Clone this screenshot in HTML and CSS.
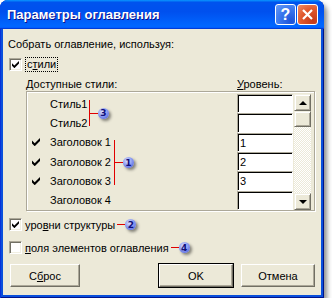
FILE: index.html
```html
<!DOCTYPE html>
<html lang="ru">
<head>
  <meta charset="UTF-8" />
  <title>Параметры оглавления</title>
  <link rel="stylesheet" href="styles.css">
</head>
<body>
  <div class="window">
    <div class="titlebar">
      <span class="title">Параметры оглавления</span>
      <span class="tbtn help">?</span>
      <span class="tbtn close">
        <svg width="13" height="13" viewBox="0 0 13 13"><path d="M2 2 L11 11 M11 2 L2 11" stroke="#fff" stroke-width="2.2" /></svg>
      </span>
    </div>

    <div class="body">
      <div class="caption">Собрать оглавление, используя:</div>

      <label class="check-row">
        <span class="checkbox"><svg class="tick" viewBox="0 0 7 7"><path d="M0 2.2 L2.4 4.6 L7 0 L7 2.6 L2.4 7.2 L0 4.8 Z" /></svg></span>
        <span class="focus">с<u>т</u>или</span>
      </label>

      <div class="list-head">
        <span class="avail">Доступные стили:</span>
        <span><u>У</u>ровень:</span>
      </div>

      <div class="styles-frame">
        <div class="style-list">
          <div class="style-row"><span class="mark"></span>Стиль1</div>
          <div class="style-row"><span class="mark"></span>Стиль2</div>
          <div class="style-row"><span class="mark"><svg class="tick" viewBox="0 0 7 7"><path d="M0 2.2 L2.4 4.6 L7 0 L7 2.6 L2.4 7.2 L0 4.8 Z" /></svg></span>Заголовок 1</div>
          <div class="style-row"><span class="mark"><svg class="tick" viewBox="0 0 7 7"><path d="M0 2.2 L2.4 4.6 L7 0 L7 2.6 L2.4 7.2 L0 4.8 Z" /></svg></span>Заголовок 2</div>
          <div class="style-row"><span class="mark"><svg class="tick" viewBox="0 0 7 7"><path d="M0 2.2 L2.4 4.6 L7 0 L7 2.6 L2.4 7.2 L0 4.8 Z" /></svg></span>Заголовок 3</div>
          <div class="style-row"><span class="mark"></span>Заголовок 4</div>

          <div class="bracket b-styles"><span class="stem"></span><span class="badge">3</span></div>
          <div class="bracket b-heads"><span class="stem"></span><span class="badge">1</span></div>
        </div>

        <div class="levels">
          <div class="level"></div>
          <div class="level"></div>
          <div class="level">1</div>
          <div class="level">2</div>
          <div class="level">3</div>
          <div class="level"></div>
        </div>

        <div class="scrollbar">
          <div class="sb-btn"><span class="arrow up"></span></div>
          <div class="sb-btn thumb"></div>
          <div class="sb-track"></div>
          <div class="sb-btn"><span class="arrow down"></span></div>
        </div>
      </div>

      <label class="check-row after-frame">
        <span class="checkbox"><svg class="tick" viewBox="0 0 7 7"><path d="M0 2.2 L2.4 4.6 L7 0 L7 2.6 L2.4 7.2 L0 4.8 Z" /></svg></span>
        <span class="text">уро<u>в</u>ни структуры</span>
        <span class="stem"></span><span class="badge">2</span>
      </label>

      <label class="check-row second">
        <span class="checkbox"></span>
        <span class="text"><u>п</u>оля элементов оглавления</span>
        <span class="stem"></span><span class="badge">4</span>
      </label>

      <div class="buttons">
        <button class="reset">С<u>б</u>рос</button>
        <button class="ok">OK</button>
        <button>Отмена</button>
      </div>
    </div>
  </div>
</body>
</html>
```

FILE: styles.css
```css
body {
  margin: 0;
  background: #fff;
  font-family: 'Liberation Sans', Arial, sans-serif;
  font-size: 11px;
  color: #000;
}
u {
  text-decoration: underline;
  text-underline-offset: 1px;
}
.window {
  width: 324px;
  height: 298px;
  display: flex;
  flex-direction: column;
  background: #0a4fdc;
  border-radius: 8px 8px 0 0;
  box-shadow: inset 1px 0 #0831d9, inset -1px -1px #00138c, 3px 4px 5px rgba(0, 0, 0, 0.45);
}
.titlebar {
  flex: none;
  height: 29px;
  display: flex;
  align-items: center;
  gap: 1px;
  padding: 0 6px 0 7px;
  border-radius: 8px 8px 0 0;
  background: linear-gradient(180deg, #0997ff, #0053ee 8%, #0050ee 40%, #0066ff 88%, #0066ff 93%, #005bff 95%, #003dd7 96%, #003dd7);
}
.title {
  flex: 1;
  color: #fff;
  font-weight: bold;
  font-size: 13px;
  text-shadow: 1px 1px #0f1089;
}
.tbtn {
  width: 21px;
  height: 21px;
  box-sizing: border-box;
  border: 1px solid #fff;
  border-radius: 3px;
  display: flex;
  align-items: center;
  justify-content: center;
  color: #fff;
}
.help {
  font-size: 16px;
  font-weight: bold;
  background: radial-gradient(circle at 80% 85%, #1c52d8, #3b78ee 55%, #6b9cf6);
}
.close {
  background: radial-gradient(circle at 80% 85%, #c4391a, #e0582e 55%, #f08e66);
}
.body {
  flex: 1;
  margin: 0 3px 3px;
  padding: 9px 6px 0 5px;
  background: #ece9d8;
}
.caption {
  line-height: 13px;
}
.check-row {
  height: 15px;
  margin: 6px 0 0 1px;
  display: flex;
  align-items: center;
}
.checkbox {
  width: 13px;
  height: 13px;
  box-sizing: border-box;
  margin-right: 3px;
  display: flex;
  align-items: center;
  justify-content: center;
  background: #fff;
  border: 1px solid;
  border-color: #aca899 #fff #fff #aca899;
  box-shadow: inset 1px 1px #716f64, inset -1px -1px #f1efe2;
}
.tick {
  width: 7px;
  height: 7px;
  fill: #000;
}
.focus {
  padding: 0 1px;
  line-height: 13px;
  border: 1px dotted #000;
}
.list-head {
  display: flex;
  margin: 6px 0 0 18px;
  line-height: 13px;
}
.avail {
  width: 211px;
}
.styles-frame {
  margin-left: 18px;
  height: 116px;
  padding: 2px 3px 0 0;
  display: flex;
  border: 1px solid #aca899;
  box-shadow: inset 1px 1px #fff, 1px 1px #fff;
}
.style-list {
  position: relative;
  width: 210px;
  display: grid;
  grid-template-rows: repeat(6, 1fr);
}
.style-row {
  display: flex;
  align-items: center;
  padding-left: 5px;
}
.mark {
  width: 18px;
  display: flex;
}
.mark .tick {
  width: 8px;
  height: 8px;
}
.levels {
  width: 56px;
  display: grid;
  grid-template-rows: repeat(6, 1fr);
}
.level {
  padding: 3px 0 0 2px;
  background: #fff;
  border: 1px solid;
  border-color: #aca899 #fff #fff #aca899;
  box-shadow: inset 1px 1px #000;
}
.scrollbar {
  width: 17px;
  margin-left: 1px;
  display: flex;
  flex-direction: column;
}
.sb-btn {
  height: 17px;
  box-sizing: border-box;
  display: flex;
  align-items: center;
  justify-content: center;
  background: #ece9d8;
  border: 1px solid;
  border-color: #f1efe2 #716f64 #716f64 #f1efe2;
  box-shadow: inset 1px 1px #fff, inset -1px -1px #aca899;
}
.thumb {
  height: 16px;
}
.sb-track {
  flex: 1;
  background: conic-gradient(#fff 25%, #ece9d8 0 50%, #fff 0 75%, #ece9d8 0);
  background-size: 2px 2px;
}
.arrow {
  width: 0;
  height: 0;
  border-left: 4px solid transparent;
  border-right: 4px solid transparent;
}
.arrow.up {
  border-bottom: 4px solid #000;
}
.arrow.down {
  border-top: 4px solid #000;
}
.bracket {
  position: absolute;
  display: flex;
  align-items: center;
  border-left: 1px solid #e00000;
}
.b-styles {
  left: 62px;
  top: 6px;
  height: 26px;
}
.b-heads {
  left: 87px;
  top: 46px;
  height: 45px;
}
.stem {
  width: 8px;
  height: 1px;
  background: #e00000;
}
.badge {
  width: 11px;
  height: 11px;
  border-radius: 50%;
  display: flex;
  align-items: center;
  justify-content: center;
  font: bold 9px 'DejaVu Sans', sans-serif;
  color: #10107a;
  background: radial-gradient(circle at 40% 35%, #dfe4ff, #8595f0 50%, #4152d0);
  box-shadow: 2px 2px 3px rgba(0, 0, 0, 0.45);
}
.check-row .text + .stem {
  margin-left: 2px;
}
.after-frame {
  margin-top: 6px;
}
.second {
  margin-top: 8px;
}
.buttons {
  display: flex;
  gap: 8px;
  margin: 9px 0 0 2px;
}
button {
  width: 74px;
  height: 23px;
  padding: 0;
  font: inherit;
  color: #000;
  background: #ece9d8;
  border: 1px solid;
  border-color: #fff #716f64 #716f64 #fff;
  box-shadow: inset -1px -1px #aca899;
}
.reset {
  width: 70px;
  margin-right: 71px;
}
.ok {
  outline: 1px solid #000;
}
```
